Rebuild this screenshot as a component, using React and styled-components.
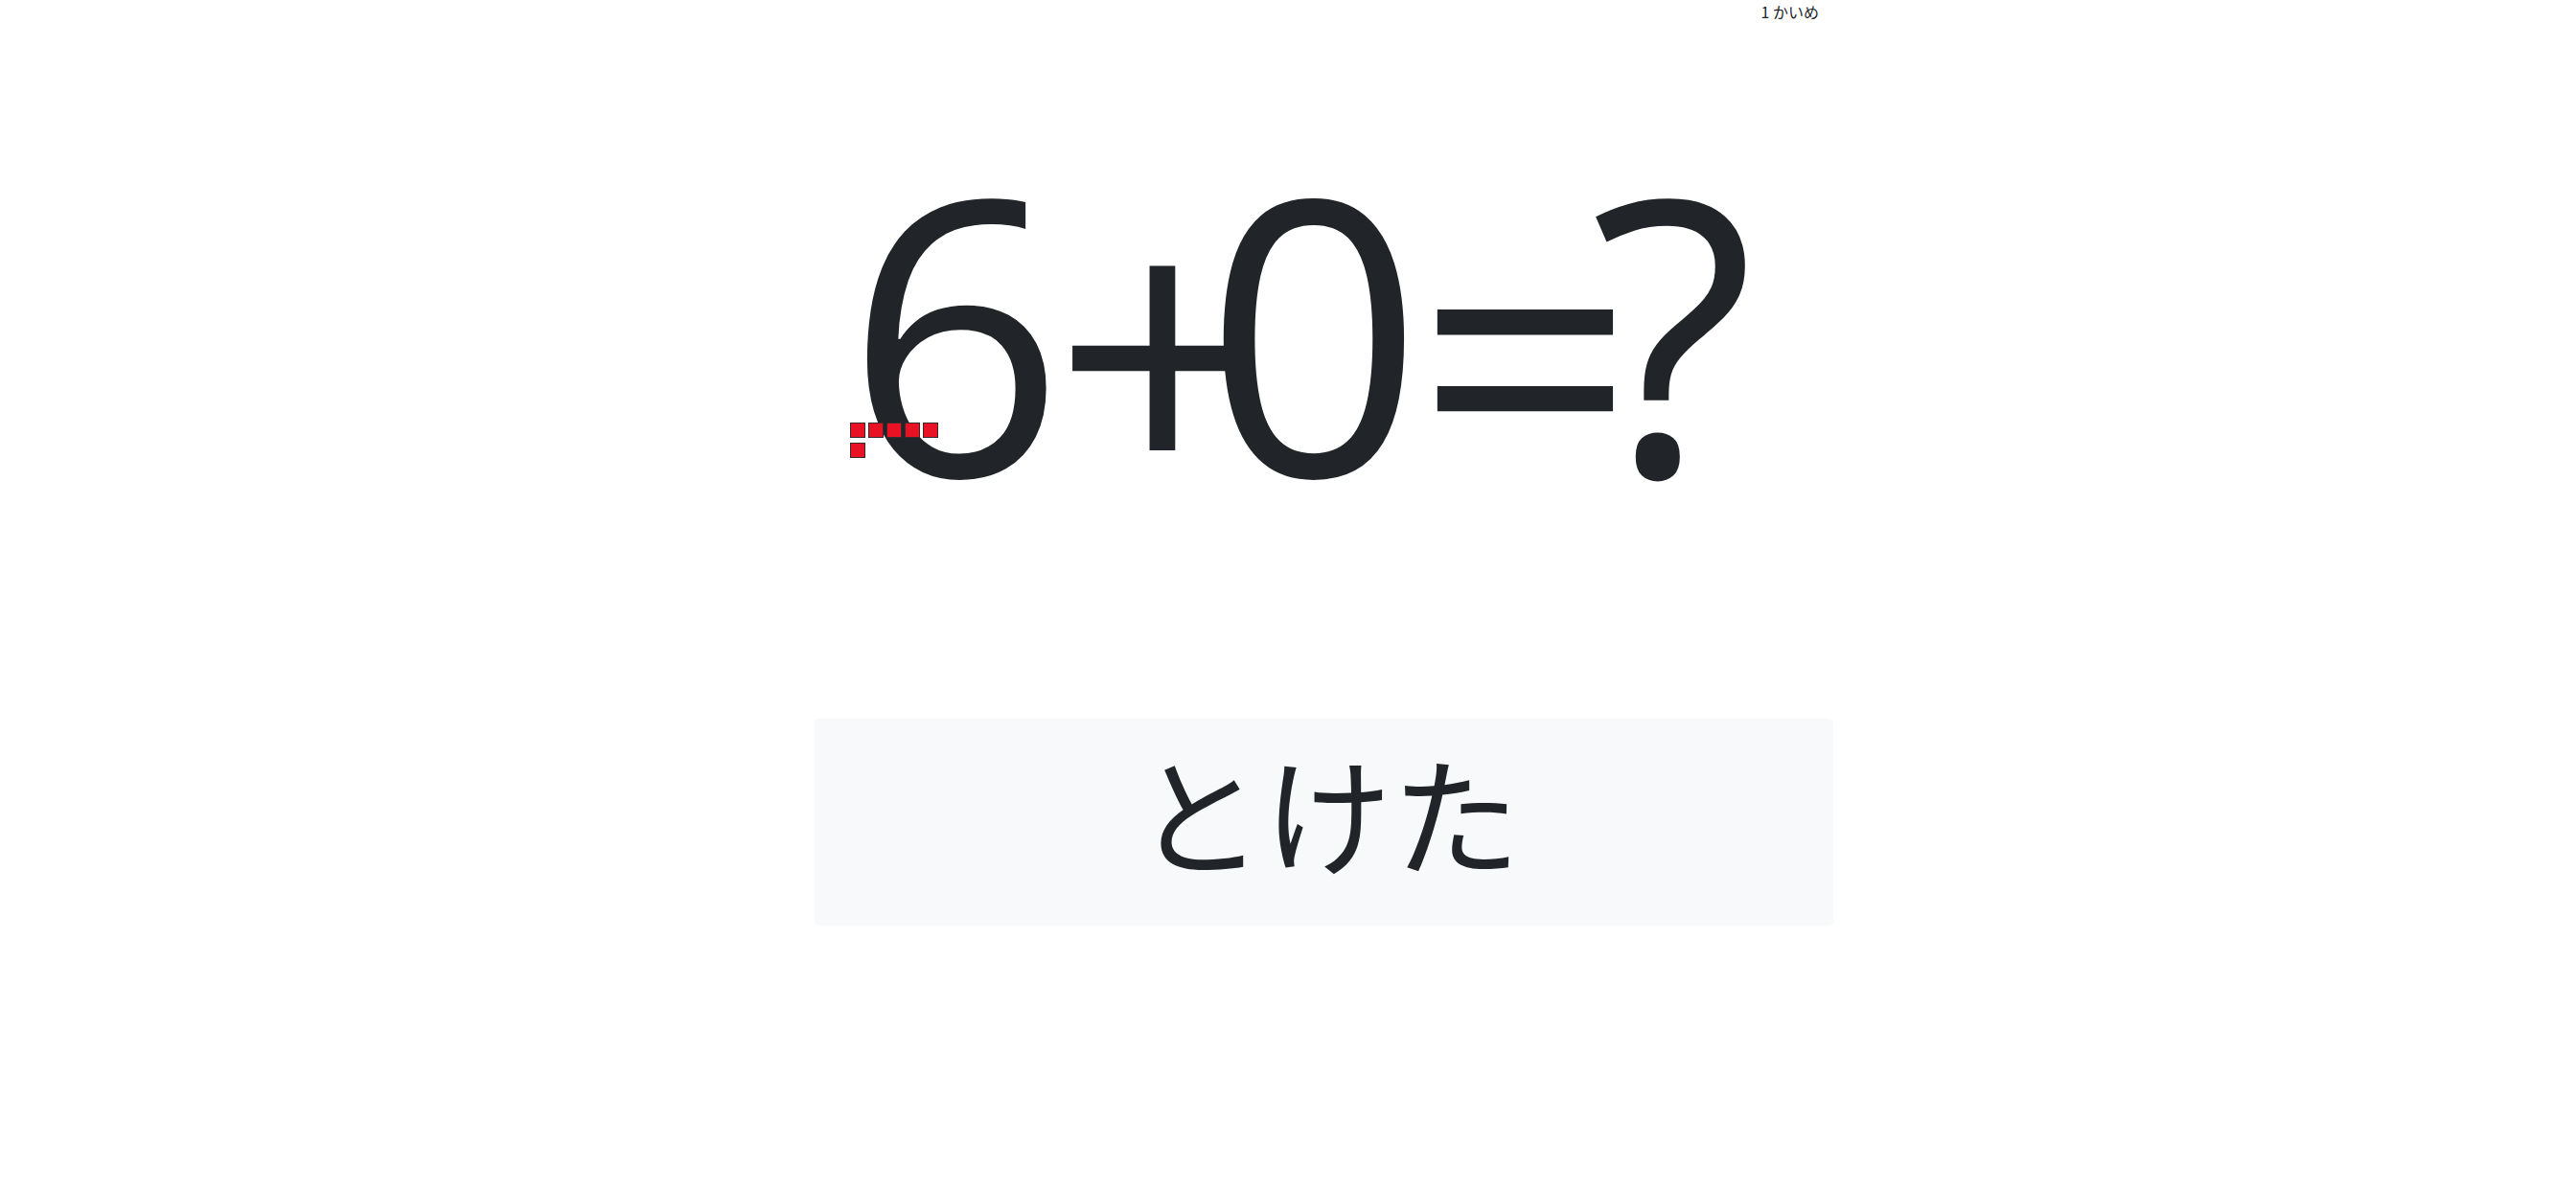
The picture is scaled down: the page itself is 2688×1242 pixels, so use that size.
import React from 'react'
import styled, { createGlobalStyle } from 'styled-components'

const GlobalStyle = createGlobalStyle`
  html, body {
    margin: 0;
    padding: 0;
    background: #fff;
  }
  body {
    font-family: "Noto Sans CJK JP", "Noto Sans", sans-serif;
    color: #212529;
  }
`;

const Page = styled.div`
  width: 2688px;
  min-height: 1242px;
  display: flex;
  flex-direction: column;
`;

const TopBar = styled.div`
  width: 1898px;
  display: flex;
  justify-content: flex-end;
  font-size: 16px;
  line-height: 24px;
`;

const Equation = styled.div`
  margin-top: 118px;
  padding-left: 26px;
  display: flex;
  align-items: flex-start;
  justify-content: center;
  font-family: "Open Sans", "Noto Sans", sans-serif;
  font-size: 400px;
  line-height: 1;
  height: 400px;
`;

// operators sit a little lower than the digits
const Glyph = styled.span`
  position: relative;
  margin-left: ${p => p.$shift || 0}px;
  margin-top: ${p => p.$drop || 0}px;
`;

// counters drawn over the first number
const Dots = styled.div`
  position: absolute;
  left: 5px;
  top: 299px;
  display: grid;
  grid-template-columns: repeat(5, 16px);
  column-gap: 3px;
  row-gap: 5px;
`;

const Dot = styled.span`
  width: 16px;
  height: 16px;
  box-sizing: border-box;
  background: #e81224;
  border: 1px solid #3a2a2c;
`;

const ButtonRow = styled.div`
  margin-top: 208px;
  padding-left: 850px;
`;

const SolvedButton = styled.button`
  width: 1063px;
  height: 216px;
  border: none;
  border-radius: 5px;
  background: #f8f9fa;
  color: #212529;
  font-family: "Noto Sans CJK JP", sans-serif;
  font-size: 134px;
  line-height: 1;
  padding: 0 0 24px 8px;
  cursor: pointer;
`;

function App() {
  const count = 6
  return (
    <Page>
      <GlobalStyle />
      <TopBar>1 かいめ</TopBar>
      <Equation>
        <Glyph>
          6
          <Dots>
            {Array.from({ length: count }).map((_, i) => <Dot key={i} />)}
          </Dots>
        </Glyph>
        <Glyph $shift={-12} $drop={18}>+</Glyph>
        <Glyph $shift={-71}>0</Glyph>
        <Glyph $shift={-8} $drop={20}>=</Glyph>
        <Glyph $shift={-47}>?</Glyph>
      </Equation>
      <ButtonRow>
        <SolvedButton>とけた</SolvedButton>
      </ButtonRow>
    </Page>
  )
}

export default App
